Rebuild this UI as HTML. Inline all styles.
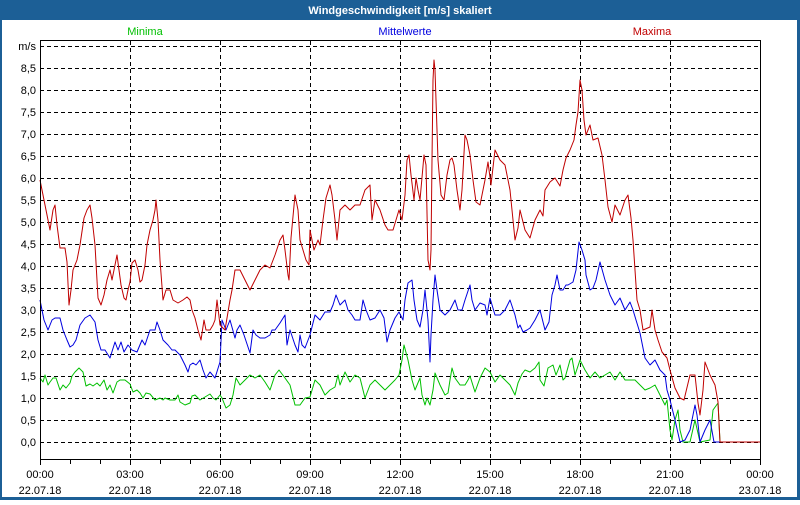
<!DOCTYPE html>
<html><head><meta charset="utf-8"><style>
html,body{margin:0;padding:0;background:#fff}
body{width:800px;height:500px;overflow:hidden;font-family:"Liberation Sans",sans-serif}
</style></head><body>
<svg width="800" height="500" viewBox="0 0 800 500" xmlns="http://www.w3.org/2000/svg" font-family="Liberation Sans, sans-serif" font-size="11">
<rect x="0" y="0" width="800" height="500" fill="#1c5f96"/>
<rect x="2" y="20" width="795" height="477" fill="#fff"/>
<text x="400" y="14" fill="#fff" font-weight="bold" text-anchor="middle">Windgeschwindigkeit [m/s] skaliert</text>
<text x="145" y="35" fill="#00c000" text-anchor="middle">Minima</text>
<text x="405" y="35" fill="#0000e0" text-anchor="middle">Mittelwerte</text>
<text x="652" y="35" fill="#c00000" text-anchor="middle">Maxima</text>
<g stroke="#000" stroke-width="1" stroke-dasharray="4,3" fill="none">
<path d="M40 46.5H760M40 68.5H760M40 90.5H760M40 112.5H760M40 134.5H760M40 156.5H760M40 178.5H760M40 200.5H760M40 222.5H760M40 244.5H760M40 266.5H760M40 288.5H760M40 310.5H760M40 332.5H760M40 354.5H760M40 376.5H760M40 398.5H760M40 420.5H760M40 442.5H760"/>
<path d="M130.5 41V460M220.5 41V460M310.5 41V460M400.5 41V460M490.5 41V460M580.5 41V460M670.5 41V460"/>
</g>
<g fill="#000" text-anchor="end">
<text x="36" y="50">m/s</text><text x="36" y="72">8,5</text><text x="36" y="94">8,0</text><text x="36" y="116">7,5</text><text x="36" y="138">7,0</text><text x="36" y="160">6,5</text><text x="36" y="182">6,0</text><text x="36" y="204">5,5</text><text x="36" y="226">5,0</text><text x="36" y="248">4,5</text><text x="36" y="270">4,0</text><text x="36" y="292">3,5</text><text x="36" y="314">3,0</text><text x="36" y="336">2,5</text><text x="36" y="358">2,0</text><text x="36" y="380">1,5</text><text x="36" y="402">1,0</text><text x="36" y="424">0,5</text><text x="36" y="446">0,0</text>
</g>
<g fill="none" stroke-width="1" stroke-linejoin="round">
<polyline stroke="#00c000" points="40,378 43,382 45,375 48,385 50,382 53,378 56,378 60,390 63,385 66,388 70,383 72,376 75,372 79,368 83,372 86,386 90,384 93,386 97,383 100,386 104,380 107,390 110,385 113,393 117,382 120,380 125,380 130,384 133,392 137,390 140,393 143,398 146,393 150,394 155,400 160,398 163,400 165,398 170,400 175,400 178,395 180,402 185,405 190,403 192,396 195,395 200,400 205,397 210,394 213,398 216,400 220,395 222,398 226,408 230,405 233,395 236,378 240,385 245,380 250,375 255,378 260,375 265,382 270,390 275,375 279,370 285,378 290,385 295,405 300,405 305,398 310,397 315,380 320,385 325,395 330,390 335,387 338,375 340,385 345,372 350,382 355,375 360,378 365,398 370,385 375,380 380,385 385,390 390,385 395,380 399,375 402,360 404,345 408,360 412,380 415,390 420,378 422,395 425,405 427,398 430,405 433,390 435,373 440,385 445,395 448,393 450,380 452,368 455,378 460,385 465,385 468,380 470,376 475,392 480,378 485,368 490,372 495,382 500,375 505,380 510,385 515,395 518,383 522,374 525,370 530,372 535,368 539,362 540,380 544,386 548,368 553,365 556,375 560,365 563,380 565,378 570,360 572,358 575,375 580,360 585,370 590,378 595,372 600,378 605,375 610,372 615,380 620,372 625,380 630,380 635,380 640,385 645,390 650,388 655,385 660,395 665,405 667,400 670,430 672,440 675,420 678,410 680,430 683,442 690,442 695,420 700,442 710,440 713,410 718,403 720,442 760,442"/>
<polyline stroke="#0000e0" points="40,300 44,320 48,330 52,320 55,318 60,318 63,330 67,340 70,347 73,345 76,340 80,325 85,318 90,315 95,322 98,340 101,350 105,350 110,358 115,342 118,350 121,342 124,352 128,345 132,350 137,352 142,340 145,345 150,330 155,330 157,322 160,330 163,340 168,345 172,350 175,350 180,355 185,365 188,372 190,365 193,363 196,365 200,360 203,370 206,378 210,372 215,378 220,362 222,320 226,330 230,320 235,338 237,330 240,325 244,335 250,353 253,330 256,335 260,338 265,338 270,335 272,330 275,330 280,323 285,315 287,345 290,330 295,345 298,352 300,335 302,345 305,348 310,335 315,315 320,320 325,312 330,312 333,305 336,295 340,305 345,300 348,310 352,315 355,320 360,320 363,300 366,310 370,320 375,318 380,310 384,318 387,342 390,330 395,318 399,312 403,320 405,300 408,283 412,280 414,300 417,320 420,327 423,310 425,290 428,320 430,362 431,335 433,300 435,275 437,290 440,310 445,315 450,310 455,300 458,310 462,310 465,300 470,285 472,300 475,310 480,303 485,305 487,315 490,298 495,315 500,315 505,310 510,300 515,315 518,328 520,325 523,332 527,330 530,328 535,320 540,310 545,330 549,322 552,295 555,285 557,275 560,290 563,290 566,285 568,285 573,282 576,270 579,242 582,250 585,260 586,275 590,290 593,288 596,280 600,262 605,280 610,295 615,305 620,298 625,310 630,302 633,310 636,320 640,333 645,358 650,365 655,360 660,370 665,375 667,390 670,400 675,420 680,442 685,440 690,430 695,405 697,415 700,442 705,430 710,420 714,442 760,442"/>
<polyline stroke="#c00000" points="40,180 44,200 47,215 50,230 53,210 55,205 57,225 60,248 65,248 67,262 69,305 71,290 73,270 77,260 80,245 84,218 87,210 90,205 92,218 95,245 98,298 101,305 104,295 107,280 110,270 112,280 115,265 117,255 119,270 121,285 124,298 126,300 128,290 130,282 132,263 135,260 138,270 140,282 142,280 145,265 147,245 150,230 153,220 155,210 156,200 158,220 160,260 163,300 166,290 170,290 173,300 178,303 183,300 187,297 190,300 192,310 195,318 198,330 201,340 204,320 206,330 210,330 213,325 215,320 217,300 220,325 225,330 230,300 232,290 235,270 240,270 245,280 250,290 255,280 260,270 265,265 270,268 275,255 280,240 283,235 285,250 288,275 289,280 291,238 295,195 298,210 300,240 303,250 306,260 309,265 310,230 314,250 318,240 320,245 323,220 326,198 330,185 332,195 335,220 337,240 340,210 345,205 350,210 355,205 360,205 365,190 370,185 372,220 375,200 380,210 385,225 388,230 393,230 396,220 399,210 402,220 405,195 407,160 409,155 411,175 414,200 416,178 418,190 420,200 424,155 426,165 428,260 430,270 431,250 432,160 433,80 434,60 435,70 438,160 441,195 444,200 447,175 450,160 452,158 454,165 457,190 460,210 462,190 465,135 467,140 470,155 473,180 476,202 480,205 485,180 488,162 491,185 495,150 500,160 505,165 510,190 513,220 515,240 518,228 520,210 525,230 530,238 535,220 540,210 543,216 545,190 550,182 555,178 560,186 563,170 566,158 570,150 574,140 576,125 578,112 580,80 582,90 584,120 586,135 590,125 593,140 598,138 602,155 605,180 608,207 612,222 615,205 620,215 625,200 628,195 631,218 633,240 637,300 640,310 643,330 650,327 652,310 655,330 658,340 662,352 667,358 670,370 675,388 680,398 684,400 690,375 695,375 698,403 700,415 703,390 705,362 710,375 715,385 718,402 720,442 760,442"/>
</g>
<rect x="40.5" y="40.5" width="720" height="419" fill="none" stroke="#000" stroke-width="1"/>
<path d="M40.5 460V465M70.5 460V464M100.5 460V464M130.5 460V465M160.5 460V464M190.5 460V464M220.5 460V465M250.5 460V464M280.5 460V464M310.5 460V465M340.5 460V464M370.5 460V464M400.5 460V465M430.5 460V464M460.5 460V464M490.5 460V465M520.5 460V464M550.5 460V464M580.5 460V465M610.5 460V464M640.5 460V464M670.5 460V465M700.5 460V464M730.5 460V464M760.5 460V465" stroke="#000"/>
<g fill="#000" text-anchor="middle">
<text x="40" y="478">00:00</text><text x="40" y="494">22.07.18</text>
<text x="130" y="478">03:00</text><text x="130" y="494">22.07.18</text>
<text x="220" y="478">06:00</text><text x="220" y="494">22.07.18</text>
<text x="310" y="478">09:00</text><text x="310" y="494">22.07.18</text>
<text x="400" y="478">12:00</text><text x="400" y="494">22.07.18</text>
<text x="490" y="478">15:00</text><text x="490" y="494">22.07.18</text>
<text x="580" y="478">18:00</text><text x="580" y="494">22.07.18</text>
<text x="670" y="478">21:00</text><text x="670" y="494">22.07.18</text>
<text x="760" y="478">00:00</text><text x="760" y="494">23.07.18</text>
</g>
</svg>
</body></html>
